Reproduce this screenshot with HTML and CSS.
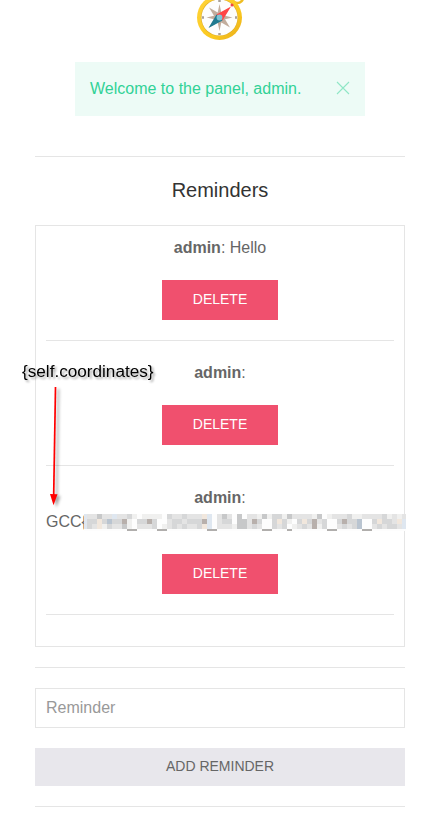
FILE: index.html
```
<!DOCTYPE html>
<html lang="en">
<head>
<meta charset="utf-8">
<title>Reminders</title>
<link rel="stylesheet" href="styles.css">
</head>
<body>
<main class="panel">
  <svg class="logo" width="56" height="42" viewBox="192 0 56 42" aria-hidden="true">
    <defs>
      <linearGradient id="gold" x1="0" y1="0" x2="1" y2="1"><stop offset="0" stop-color="#ffd43b"/><stop offset=".65" stop-color="#fbc91f"/><stop offset="1" stop-color="#e6a91b"/></linearGradient>
    </defs>
    <circle cx="237.500" cy="-2.500" r="5.500" fill="none" stroke="#efbd22" stroke-width="2.600"/>
    <circle cx="219.5" cy="17.5" r="22.5" fill="url(#gold)"/>
    <circle cx="219.5" cy="17.5" r="18.600" fill="#e0ac20"/>
    <circle cx="219.5" cy="17.5" r="18" fill="#fdfdfd"/>
    <path d="M219.5 0v2M219.5 33v2M202 17.5h2M235 17.5h2" stroke="#a8a098" stroke-width="2.5"/>
    <path d="M219.5 4l1.800 8.500 8.700-5-5 8.200 7.500 1.800-7.500 1.800 5 8.200-8.700-5-1.800 8.500-1.800-8.500-8.700 5 5-8.200-7.500-1.800 7.500-1.800-5-8.200 8.700 5z" fill="#c2ad9d"/>
    <path d="M231 6.500L222.500 20.500 216.500 14.500z" fill="#ff4545"/>
    <path d="M208.500 28L216.500 14.500 222.500 20.500z" fill="#217b91"/>
    <circle cx="232" cy="5" r="1.500" fill="#f0444c"/>
    <circle cx="219.500" cy="17.500" r="2.900" fill="#80c4d4"/>
  </svg>
  <div class="alert">
    <span>Welcome to the panel, admin.</span>
    <svg class="close" width="14" height="14" viewBox="0 0 14 14" aria-label="Close"><path d="M1 1l12 12M13 1L1 13"/></svg>
  </div>
  <hr class="rule">
  <h1 class="title">Reminders</h1>
  <section class="list">
    <article class="item">
      <p class="text"><b>admin</b>: Hello</p>
      <button class="delete">DELETE</button>
    </article>
    <article class="item">
      <p class="text"><b>admin</b>:</p>
      <button class="delete">DELETE</button>
    </article>
    <article class="item">
      <p class="text"><b>admin</b>:</p>
      <p class="secret">GCC{<span class="mosaic" id="mosaic"></span></p>
      <button class="delete">DELETE</button>
    </article>
  </section>
  <hr class="rule">
  <input class="field" type="text" placeholder="Reminder">
  <button class="add">ADD REMINDER</button>
  <hr class="rule">
</main>
<svg class="note" width="145" height="160" viewBox="15 355 145 160">
  <text x="22" y="377" textLength="131.500" lengthAdjust="spacingAndGlyphs">{self.coordinates}</text>
  <g class="arrow"><path d="M55.500 387L53.700 495" stroke="#f00" stroke-width="1.700"/><path d="M50 494l7.500.2-4 11z" fill="#f00"/></g>
</svg>
<script src="mosaic.js"></script>
</body>
</html>
```
FILE: styles.css
```
* { box-sizing: border-box; }
body {
  margin: 0;
  height: 813px;
  overflow: hidden;
  position: relative;
  background: #fff;
  color: #666;
  font: 16px/24px "Liberation Sans", Arial, sans-serif;
}
.panel {
  width: 370px;
  margin-left: 35px;
  display: flex;
  flex-direction: column;
}
.logo { margin-left: 157px; }
.alert {
  margin: 20px 40px 40px;
  height: 54px;
  padding: 0 15px;
  display: flex;
  align-items: center;
  justify-content: space-between;
  background: #edfbf6;
  color: #32d296;
}
.close { opacity: .5; margin-top: -2px; }
.close path { stroke: #32d296; stroke-width: 1.1; fill: none; }
.rule {
  width: 100%;
  height: 1px;
  margin: 0;
  border: 0;
  background: #e5e5e5;
}
.title {
  margin: 20px 0 22px;
  font-size: 20px;
  line-height: 26px;
  font-weight: 400;
  color: #333;
  text-align: center;
}
.list {
  height: 422px;
  margin-bottom: 20px;
  padding: 10px;
  border: 1px solid #e5e5e5;
}
.item {
  display: flex;
  flex-direction: column;
  align-items: center;
  padding-bottom: 20px;
  margin-bottom: 20px;
  border-bottom: 1px solid #e5e5e5;
}
.text, .secret { margin: 0; }
.secret { position: relative; align-self: flex-start; }
.delete, .add {
  border: 0;
  font: 14px/38px "Liberation Sans", Arial, sans-serif;
}
.delete {
  width: 116px;
  height: 40px;
  margin-top: 20px;
  padding: 0 0 2px;
  background: #f0506e;
  color: #fff;
}
.field {
  height: 40px;
  margin: 20px 0;
  padding: 0 10px;
  border: 1px solid #e5e5e5;
  border-radius: 0;
  font: 16px "Liberation Sans", Arial, sans-serif;
}
.field::placeholder { color: #999; }
.add {
  height: 38px;
  margin-bottom: 20px;
  padding: 0 0 2px;
  line-height: 36px;
  background: #e8e7ec;
  color: #666;
}
.mosaic {
  position: absolute;
  left: 38px;
  top: 4px;
  width: 322px;
  height: 17px;
  overflow: hidden;
  display: grid;
  grid-template-columns: 3px repeat(64, 5px);
  grid-template-rows: 5px 5px 5px 2px;
}
.w { background: #fdfdfd; }
.p { background: #f0f0ef; }
.l { background: #e4e4e4; }
.m { background: #d6d7d8; }
.d { background: #c7c8c9; }
.k { background: #b8b0ac; }
.o { background: #f1e7dd; }
.b { background: #dfe7f0; }
.s { background: #b9c4d0; }
.u { background: #b0aeac; }
.note { position: absolute; left: 15px; top: 355px; }
.note text {
  font: 16px "Liberation Sans", Arial, sans-serif;
  fill: #000;
  filter: drop-shadow(2px 2px 1px rgba(0, 0, 0, .35));
}
.arrow { filter: drop-shadow(3px 2px 1.5px rgba(0, 0, 0, .35)); }
```
FILE: mosaic.js
```
// One letter per tile, each naming a shade class.
const rows = [
  'blldllbllmpwppppwmllmlllobwldlwdwllpdpmmpdllllpdwplllmppllllmplpl',
  'bmmomsmmkpwmmkmwwlmmlmmmkbwlmmwddlkmwwmompwmomklmwwmkmmswwmommlob',
  'bmlopmlldpwlllmwplmlmllmobwlllpddlmlwwmlmwplmlkpmwwlmlmswwlmlmmlb'
];
const under = [9, 10, 15, 16, 25, 26, 36, 37, 41, 49, 50, 56, 57];
rows.push(Array.from({ length: 65 }, (_, i) => under.includes(i) ? 'u' : 'w').join(''));
const mosaic = document.getElementById('mosaic');
for (const row of rows) {
  for (let i = 0; i < 65; i++) {
    const tile = document.createElement('i');
    tile.className = row[i] || 'l';
    mosaic.append(tile);
  }
}
```
